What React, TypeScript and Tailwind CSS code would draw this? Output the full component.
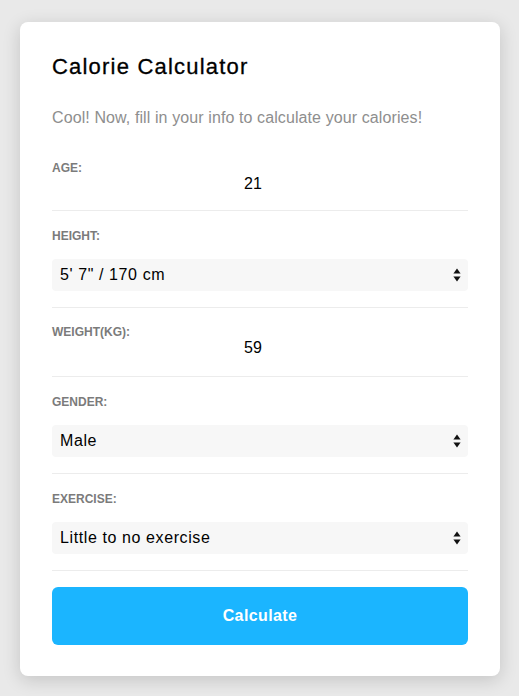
import React from "react";

const font = { fontFamily: '"Liberation Sans", Arial, Helvetica, sans-serif' };

function Arrows() {
  return (
    <svg width="8" height="14" viewBox="0 0 8 14" className="shrink-0">
      <path d="M4 0.5 L7.6 5.6 L0.4 5.6 Z" fill="#111" />
      <path d="M0.4 8.4 L7.6 8.4 L4 13.5 Z" fill="#111" />
    </svg>
  );
}

function Label({ children }: { children: React.ReactNode }) {
  return (
    <div className="text-[12px] leading-[14px] font-bold text-[#7b7b7b] uppercase">{children}</div>
  );
}

function SelectBox({ value, className = "" }: { value: string; className?: string }) {
  return (
    <div className={`h-8 rounded bg-[#f7f7f7] flex items-center justify-between pl-2 pr-[7px] ${className}`}>
      <span className="text-[16px] leading-[20px] tracking-[0.6px] text-black">{value}</span>
      <Arrows />
    </div>
  );
}

export default function App() {
  return (
    <div className="min-h-screen bg-[#e9e9e9] pt-[22px] pb-5" style={font}>
      <div className="ml-5 w-[480px] bg-white rounded-lg shadow-[0_4px_18px_rgba(0,0,0,0.16)] px-8 pt-8 pb-[31px]">
        <h1 className="text-[22px] leading-[26px] tracking-[1.2px] text-black [-webkit-text-stroke:0.3px_black]">
          Calorie Calculator
        </h1>
        <p className="mt-[26px] text-[16px] leading-[24px] tracking-[0.1px] text-[#8e8e8e]">
          Cool! Now, fill in your info to calculate your calories!
        </p>

        <div className="mt-[31px] pb-[17px] border-b border-[#ececec]">
          <Label>Age:</Label>
          <div className="w-[402px] h-[18px] text-center text-[16px] leading-[18px] text-black">21</div>
        </div>

        <div className="pt-[18px] pb-4 border-b border-[#ececec]">
          <Label>Height:</Label>
          <SelectBox className="mt-4" value={'5\' 7" / 170 cm'} />
        </div>

        <div className="pt-[17px] pb-[19px] border-b border-[#ececec]">
          <Label>Weight(kg):</Label>
          <div className="w-[402px] h-[18px] text-center text-[16px] leading-[18px] text-black">59</div>
        </div>

        <div className="pt-[18px] pb-4 border-b border-[#ececec]">
          <Label>Gender:</Label>
          <SelectBox className="mt-4" value="Male" />
        </div>

        <div className="pt-[18px] pb-4 border-b border-[#ececec]">
          <Label>Exercise:</Label>
          <SelectBox className="mt-4" value="Little to no exercise" />
        </div>

        <button className="mt-4 w-full h-[58px] rounded-md bg-[#1bb5ff] text-white text-[16px] font-bold tracking-[0.4px]">
          Calculate
        </button>
      </div>
    </div>
  );
}
